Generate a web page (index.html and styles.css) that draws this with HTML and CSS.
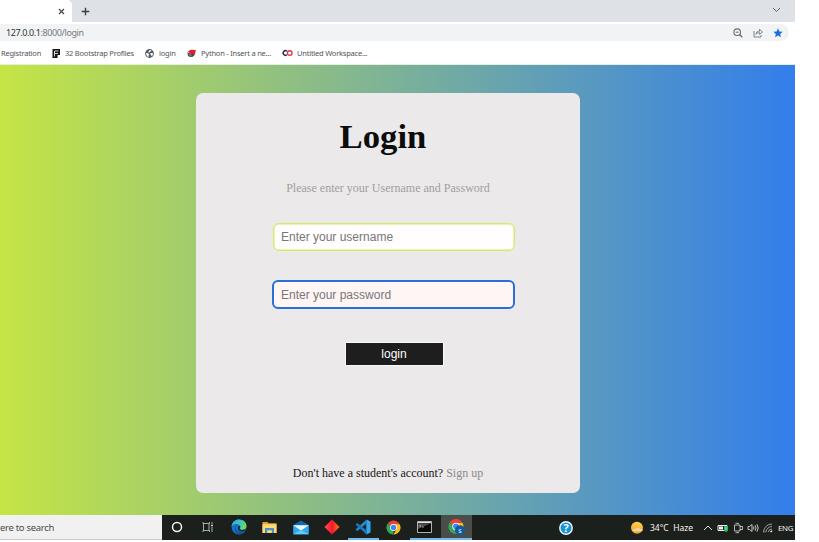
FILE: index.html
```html
<!DOCTYPE html>
<html lang="en">
<head>
<meta charset="utf-8">
<title>Login</title>
<link rel="stylesheet" href="styles.css">
</head>
<body>
<div class="screen">
  <header class="tabs">
    <div class="tab"><svg width="7" height="7" viewBox="0 0 7 7"><path d="M1 1l5 5M6 1L1 6" stroke="#45484c" stroke-width="1.2"/></svg></div>
    <svg class="new-tab" width="9" height="9" viewBox="0 0 9 9"><path d="M4.5 .7v7.6M.7 4.5h7.6" stroke="#3c4043" stroke-width="1.4"/></svg>
    <svg class="tab-menu" width="9" height="6" viewBox="0 0 9 6"><path d="M1 1l3.5 3.5L8 1" fill="none" stroke="#5f6368" stroke-width="1"/></svg>
  </header>
  <div class="toolbar">
    <div class="address">
      <span class="url"><b>127.0.0.1</b>:8000/login</span>
      <svg width="10" height="10" viewBox="0 0 10 10" fill="none" stroke="#6a6e72"><circle cx="4.200" cy="4.200" r="3.300" stroke-width="1.1"/><path d="M6.500 6.500L9.300 9.300" stroke-width="1.3"/><path d="M2.700 4.200h3" stroke-width="1"/></svg>
      <svg width="10" height="10" viewBox="0 0 10 10" fill="none" stroke="#74787c" stroke-width=".9"><path d="M1 3v6h7V7M3 6.400c.2-2.200 1.500-3.200 3.500-3.200V1.300L9.500 4 6.500 6.300V4.700C5 4.600 4 5.200 3 6.400z"/></svg>
      <svg width="10" height="10" viewBox="0 0 10 10"><path d="M5 .3l1.350 3.100 3.350.3-2.550 2.200.8 3.300L5 7.500 2.050 9.200l.8-3.300L.3 3.700l3.350-.3z" fill="#1a6fe0"/></svg>
    </div>
  </div>
  <nav class="bookmarks">
    <span class="bm registration">Registration</span>
    <span class="bm bootstrap"><svg width="8" height="9" viewBox="0 0 8 9"><path d="M.5 0H8v6H5.500v3H.5z" fill="#161616"/><path d="M2.500 7.500V2h4M2.500 4.500H6" fill="none" stroke="#fff" stroke-width=".8"/></svg><i>32 Bootstrap Profiles</i></span>
    <span class="bm globe"><svg width="9" height="9" viewBox="0 0 9 9"><circle cx="4.500" cy="4.500" r="4.400" fill="#55595d"/><path d="M1 4.100l2 .2 1.300 1.200-.8.7.3 1.700C2 7.600 1 6.200 1 4.100zM4.500 1l1.800.3-.2 1-1.600.7-.3.800-1-.6zM5.700 4l2.300.2c0 1.500-.5 2.500-1.400 3.100L6 5.700l-1-.5z" fill="#fff"/></svg><i>login</i></span>
    <span class="bm python"><svg width="9" height="9" viewBox="0 0 9 9"><path d="M.4 3.200L4 5l4-1.500-.4 2.500-2.200 1.900L2 7.700.9 6.500z" fill="#41494b"/><path d="M1 2.300L4 .8l4.800.3L8.200 4.500 5 5.500 2.800 4.500z" fill="#e31e29"/><path d="M2 5.600l2.400.8" stroke="#a6bcb9" stroke-width=".8"/></svg><i>Python - Insert a ne...</i></span>
    <span class="bm workspace"><svg width="11" height="8" viewBox="0 0 11 8" fill="none" stroke-width="1.400"><path d="M4.900 2.200A2.300 2.300 0 1 0 4.900 5.800" stroke="#162447"/><circle cx="7.700" cy="4" r="2.300" stroke="#e33a48"/></svg><i>Untitled Workspace...</i></span>
  </nav>
  <main class="page">
    <form class="card">
      <h1>Login</h1>
      <p class="hint">Please enter your Username and Password</p>
      <input class="field" type="text" placeholder="Enter your username">
      <input class="field active" type="password" placeholder="Enter your password">
      <button type="button">login</button>
      <p class="signup">Don't have a student's account? <a>Sign up</a></p>
    </form>
  </main>
  <footer class="taskbar">
    <div class="search">ere to search</div>
    <div class="apps">
    <div class="app"><svg width="12" height="12" viewBox="0 0 12 12"><circle cx="6" cy="6" r="4.500" fill="none" stroke="#f4f4f4" stroke-width="1.500"/></svg></div>
    <div class="app"><svg width="12" height="12" viewBox="0 0 12 12" fill="none" stroke="#b6bbb7" stroke-width=".9"><path d="M1 1v1.500h6.500V1M1 11V9.500h6.500V11M1.500 2.500v7M7 2.500v7M10 1v2M10 6v5"/><path d="M9.200 4.500h1.600" stroke="#fff" stroke-width="1.300"/></svg></div>
    <div class="app"><svg width="16" height="16" viewBox="0 0 16 16"><defs><linearGradient id="eg" x1="0" y1="0" x2="1" y2=".5"><stop stop-color="#2da9e1"/><stop offset=".6" stop-color="#37c8c2"/><stop offset="1" stop-color="#72db56"/></linearGradient></defs><circle cx="8" cy="8" r="7.500" fill="#1572c5"/><path d="M.5 7.500C1 3 4.400.5 8 .5c4.500 0 7.500 3 7.500 6.300 0 2.500-1.800 3.900-4 3.900-1.700 0-2.700-.7-2.400-1.500.6-.8.600-1.600.100-2.400C7.300 4.200 2.400 4.500.5 7.500z" fill="url(#eg)"/><path d="M6 6.500c-2.500 2-.9 6.500 3.500 6.800 2 .2 3.700-.6 4.700-1.300C11.500 17 4.500 15.500 4 11c-.1-2 .8-3.500 2-4.500z" fill="#104e9c"/><path d="M8.800 7c.8 1-.4 1.800-.2 2.500.4 1.800 3.800 2.100 6.100.6l-.5 1.600c-3.500 2-7.500 0-7.300-2.900.1-1 .8-2 1.900-1.800z" fill="#1d211c"/></svg></div>
    <div class="app"><svg width="15" height="13" viewBox="0 0 15 13"><path d="M.5 1h5l1 1.200h8V12H.5z" fill="#e4a52e"/><path d="M.5 3.300h14V12H.5z" fill="#ffdb75"/><path d="M3 12V7h9v5H9.800V9.200H5.200V12z" fill="#4b91c8"/></svg></div>
    <div class="app"><svg width="16" height="15" viewBox="0 0 16 15"><path d="M.3 5L8 .5 15.700 5v9H.3z" fill="#1268b5"/><path d="M.3 5.200h15.400v9.100H.3z" fill="#32a9ec"/><path d="M.3 5.200h15.400L8 10.500z" fill="#eef9fd"/><path d="M.3 14.300L8 10l7.700 4.300z" fill="#65c9f5"/></svg></div>
    <div class="app"><svg width="16" height="16" viewBox="0 0 16 16"><defs><linearGradient id="dg"><stop stop-color="#ff5548"/><stop offset=".48" stop-color="#ff163a"/><stop offset=".5" stop-color="#ed1825"/><stop offset="1" stop-color="#ff7b16"/></linearGradient></defs><path d="M8 .5L15.500 8 8 15.500.5 8z" fill="url(#dg)"/></svg></div>
    <div class="app running"><svg width="16" height="16" viewBox="0 0 16 16"><path d="M11.300.5L15.500 2.400v11.200l-4.200 1.900z" fill="#32a7ef"/><path d="M11.500.5v4.300L2.200 12 .5 10.500z" fill="#2489ca"/><path d="M11.500 15.500v-4.300L2.200 4 .5 5.500z" fill="#167abf"/></svg></div>
    <div class="app"><svg width="15" height="15" viewBox="0 0 16 16"><path d="M8 8L1.500 4.250A7.500 7.500 0 0 1 14.500 4.250z" fill="#e94335"/><path d="M8 8v7.500A7.500 7.500 0 0 1 1.500 4.250z" fill="#34a853"/><path d="M8 4.400h6.600A7.500 7.500 0 0 1 8 15.500l3.100-5.700z" fill="#fbc016"/><circle cx="8" cy="8" r="3.700" fill="#fff"/><circle cx="8" cy="8" r="2.900" fill="#4285f4"/></svg></div>
    <div class="app running"><svg width="15" height="12" viewBox="0 0 15 12"><path d="M.5.5h14v11H.5z" fill="#080a08" stroke="#aeb1ae"/><path d="M1 1.500h13" stroke="#e0e2e0" stroke-width="1.200"/><path d="M1 2.200h13L1 8z" fill="#4b4e4c"/><path d="M2.500 4l1.500 1-1.500 1M5 6h2" fill="none" stroke="#ddd" stroke-width=".6"/></svg></div>
    <div class="app running current"><svg width="18" height="17" viewBox="0 0 18 17"><path d="M8 7.500L1.500 3.750A7.500 7.500 0 0 1 14.500 3.750z" fill="#e94335"/><path d="M8 7.500V15A7.500 7.500 0 0 1 1.500 3.750z" fill="#34a853"/><path d="M8 3.900h6.600A7.500 7.500 0 0 1 8 15l3.100-5.700z" fill="#fbc016"/><circle cx="8" cy="7.500" r="3.700" fill="#fff"/><circle cx="8" cy="7.500" r="2.900" fill="#4285f4"/><circle cx="12" cy="11.200" r="5" fill="#125b9d"/><text x="12" y="13.600" text-anchor="middle" class="badge">S</text></svg></div>
    </div>
    <svg class="help" width="14" height="14" viewBox="0 0 14 14"><circle cx="7" cy="7" r="6.200" fill="#1493d6" stroke="#f2faff" stroke-width="1.400"/><text x="7" y="10.800" text-anchor="middle" class="question">?</text></svg>
    <svg class="sun" width="14" height="14" viewBox="0 0 14 14"><defs><linearGradient id="sg" x1="0" y1="0" x2="0" y2="1"><stop stop-color="#ffd34a"/><stop offset="1" stop-color="#f59d2c"/></linearGradient></defs><circle cx="7" cy="6.700" r="6" fill="url(#sg)"/><path d="M2.500 9.500c.4-1.500 2-1.600 2.900-1.300.9-1.800 3.700-1.800 4.500 0 1.500-.3 2.700.3 2.800 1.300-.7.700-1.500.8-2.500.8H4.500c-1 0-1.700-.2-2-.8z" fill="#ecd6ab"/></svg>
    <span class="weather">34°C&nbsp; Haze</span>
    <div class="tray">
      <svg viewBox="0 0 12 12"><path d="M2 8l4-4 4 4" fill="none" stroke="#e4e4e4"/></svg>
      <svg viewBox="0 0 12 12"><path d="M1 3.500h9v5H1z" fill="none" stroke="#eee"/><path d="M2 4.500h4v3H2z" fill="#eee"/><path d="M7 4h4v3c0 2-1 3-2 3S7 9 7 7z" fill="#24b35a"/><path d="M9 5v3" stroke="#d9ffe5" stroke-width=".7"/></svg>
      <svg viewBox="0 0 12 12"><path d="M2.500 3h5.500v6H2.500zM3.500 1.300h3.500M3.500 10.700h3.500M8 4.500h2.500v3H8" fill="none" stroke="#ddd" stroke-width=".8"/></svg>
      <svg viewBox="0 0 12 12"><path d="M1 4.500h1.500L5 2.500v7L2.500 7.500H1zM6.500 4.500q1 1.500 0 3M8.200 3.300q1.800 2.700 0 5.400M10 2.300q2.500 3.700 0 7.400" fill="none" stroke="#eee" stroke-width=".8"/></svg>
      <svg viewBox="0 0 12 12"><path d="M1.500 10A8.500 8.500 0 0 1 10 2M4 10a6 6 0 0 1 6-5.500M6.300 10A3.700 3.700 0 0 1 10 7" fill="none" stroke="#aaa" stroke-width=".9"/><path d="M8.300 10q0-1.500 1.700-1.500V10zM1 10h3" fill="#eee" stroke="#bbb" stroke-width=".5"/></svg>
      <span>ENG</span>
    </div>
  </footer>
</div>
</body>
</html>
```
FILE: styles.css
```css
* { box-sizing: border-box; }
body { margin: 0; background: #fff; overflow: hidden; }
svg { display: block; flex: none; }
.screen { width: 795px; height: 540px; display: flex; flex-direction: column; font-family: "Noto Sans", "Open Sans", sans-serif; }
.tabs { height: 22px; flex: none; display: flex; align-items: center; background: #dee1e6; }
.tab { width: 72px; height: 22px; display: flex; align-items: center; justify-content: flex-end; padding-right: 7px; background: #fff; border-top-right-radius: 5px; }
.new-tab { margin-left: 9px; }
.tab-menu { margin-left: auto; margin-right: 14px; margin-bottom: 3px; }
.toolbar { height: 20px; flex: none; padding: 2px 6px 0 0; }
.address { height: 17px; display: flex; align-items: center; gap: 10px; padding: 0 6px; background: #f1f3f4; border-radius: 0 9px 9px 0; }
.url { flex: 1; font-size: 9px; letter-spacing: -.4px; color: #777b80; white-space: nowrap; }
.url b { font-weight: 400; color: #33373b; }
.bookmarks { height: 23px; flex: none; display: flex; align-items: center; padding-bottom: 1px; font-size: 7.500px; letter-spacing: -.22px; color: #505357; border-bottom: 1px solid #e6efdc; }
.bm { display: flex; align-items: center; gap: 5px; white-space: nowrap; flex: none; }
.bm i { font-style: normal; }
.bm svg { margin-top: 1px; }
.registration { width: 52px; padding-left: 1px; }
.bootstrap { width: 93px; }
.globe { width: 42px; }
.python { width: 95px; }
.workspace { gap: 4px; }
.page { height: 450px; flex: none; padding: 28px 0 0 196px; background: linear-gradient(90deg, #c5e545, #327eec); }
.card { width: 384px; height: 400px; display: flex; flex-direction: column; align-items: center; background: #ebe9ea; border-radius: 7px; font-family: "Liberation Serif", serif; }
h1 { margin: 24px 10px 0 0; font-size: 34.700px; line-height: 40px; color: #0c0c0c; }
.hint { margin: 23px 0 0; font-size: 12px; line-height: 16px; color: #a1a0a1; }
.field { width: 242px; height: 28px; margin: 27px 0 0 12px; padding: 0 7px; border: 1px solid #d6ea69; box-shadow: inset 0 0 0 .5px #d6ea69; border-radius: 6px; background: #fffdfe; font: 12px "Liberation Sans", sans-serif; outline: 0; }
.field::placeholder { color: #777; opacity: 1; }
.field.active { width: 243px; height: 29px; margin-top: 29px; margin-left: 11px; border: 2px solid #2870d8; box-shadow: none; background: #fff5f5; }
button { width: 99px; height: 24px; margin: 33px 0 0 12px; padding: 0 0 1px; border: 1px solid #fafafa; background: #1e1e1e; color: #fff; font: 12px "Liberation Sans", sans-serif; }
.signup { margin: auto 0 12px; font-size: 12px; line-height: 16px; color: #171717; }
.signup a { color: #8b8a8b; }
.taskbar { height: 25px; flex: none; display: flex; align-items: center; background: #1c201c; color: #f4f4f4; }
.search { width: 162px; height: 25px; flex: none; background: #f1f1f1; border-bottom: 1px solid #c9cbc8; color: #4b4b4b; font-size: 9.500px; letter-spacing: -.3px; line-height: 25px; }
.apps { display: flex; flex: none; }
.app { width: 31px; height: 25px; flex: none; display: flex; align-items: center; justify-content: center; padding-right: 2px; border-bottom: 1px solid transparent; }
.app.running { border-bottom: 2px solid #76b9ed; }
.app.current { background: #4a4e4a; padding: 1px 0 0; }
.badge { font: 700 6px "Open Sans", sans-serif; fill: #b9ddf7; }
.question { font: 700 11px "Open Sans", sans-serif; fill: #fff; }
.help { margin-left: 87px; }
.sun { margin-left: 57px; }
.weather { width: 52px; margin-left: 6px; font-size: 8.500px; white-space: nowrap; }
.tray { display: flex; align-items: center; gap: 3px; font-size: 7.800px; letter-spacing: -.3px; }
.tray svg { width: 12px; height: 12px; }
.tray span { margin-left: 1px; }
```
